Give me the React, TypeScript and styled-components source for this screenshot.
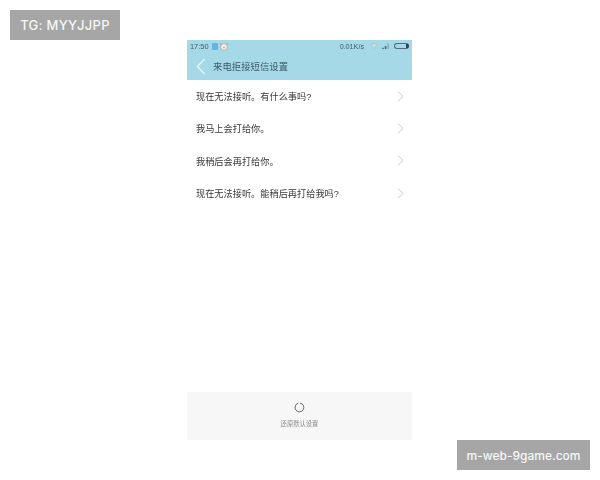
import React from 'react';
import styled, { createGlobalStyle } from 'styled-components';

const replies = ['现在无法接听。有什么事吗?', '我马上会打给你。', '我稍后会再打给你。', '现在无法接听。能稍后再打给我吗?'];

const App = () => (
  <Stage>
    <GlobalStyle />
    <Watermark $corner="top">TG: MYYJJPP</Watermark>
    <Phone>
      <Header>
        <StatusBar>
          <StatusGroup>
            <span>17:50</span>
            <AppBadge />
            <svg width="10" height="9" viewBox="0 0 10 9">
              <circle cx="5" cy="5" r="3.4" fill="#f3f1ec" stroke="#9a9a94" strokeWidth="0.7" />
              <path d="M2 3 1.5 1M8 3l.5-2" stroke="#a8a8a0" strokeWidth="1" />
              <circle cx="5" cy="5.5" r="1" fill="#c9a79f" />
            </svg>
          </StatusGroup>
          <StatusGroup>
            <NetworkSpeed>0.01K/s</NetworkSpeed>
            <StatusIcon width="8" height="6" viewBox="0 0 9 7">
              <path d="M.5 2C3 0 6 0 8.500 2L4.500 6.500Z" fill="#c2dde4" stroke="#8fb0ba" strokeWidth="0.5" />
            </StatusIcon>
            <StatusIcon width="8" height="6" viewBox="0 0 9 7">
              <path d="M0 7h2V5.500H0zM3 7h2V3.500H3z" fill="#4c6f7a" />
              <path d="M6 7h2V.5H6z" fill="#8fb0ba" />
            </StatusIcon>
            <Battery />
          </StatusGroup>
        </StatusBar>
        <TitleRow>
          <svg width="10" height="17" viewBox="0 0 10 17">
            <path d="M8.500 1 1.500 8.500l7 7.500" fill="none" stroke="#eaf6fa" strokeWidth="1.300" />
          </svg>
          <Title>来电拒接短信设置</Title>
        </TitleRow>
      </Header>
      <ReplyList>
        {replies.map((text) => (
          <ReplyRow key={text}>
            <span>{text}</span>
            <svg width="7" height="11" viewBox="0 0 7 11">
              <path d="M1 .8 6 5.500 1 10.200" fill="none" stroke="#c4c4c4" strokeWidth="0.9" />
            </svg>
          </ReplyRow>
        ))}
      </ReplyList>
      <RestoreBar>
        <svg width="11" height="11" viewBox="0 0 11 11">
          <path d="M4.300 1.200a4.400 4.400 0 1 0 1.800-.1" fill="none" stroke="#555" strokeWidth="0.9" />
        </svg>
        <RestoreLabel>还原默认设置</RestoreLabel>
      </RestoreBar>
    </Phone>
    <Watermark $corner="bottom">m-web-9game.com</Watermark>
  </Stage>
);

const GlobalStyle = createGlobalStyle`
  body {
    margin: 0;
    background: #fff;
    font-family: "Liberation Sans", "Noto Sans CJK SC", sans-serif;
  }
`;

const Stage = styled.div`
  position: relative;
  display: flex;
  justify-content: center;
  width: 600px;
  height: 480px;
  padding: 40px 1px 0 0;
  box-sizing: border-box;
  overflow: hidden;
`;

const Watermark = styled.div<{ $corner: 'top' | 'bottom' }>`
  position: absolute;
  display: flex;
  align-items: center;
  justify-content: center;
  height: 30px;
  background: #a6a6a6;
  color: #f6f6f6;
  font-family: "Inter", sans-serif;
  font-weight: 500;
  ${({ $corner }) =>
    $corner === 'top'
      ? 'top: 10px; left: 10px; width: 110px; font-size: 13px; letter-spacing: 0.3px;'
      : 'top: 440px; left: 457px; width: 133px; font-size: 12px; letter-spacing: 0;'}
`;

const Phone = styled.div`
  display: flex;
  flex-direction: column;
  width: 225px;
  height: 400px;
  background: #fff;
  filter: blur(0.45px);
`;

const Header = styled.header`
  display: flex;
  flex-direction: column;
  height: 40px;
  background: #a5d9e7;
`;

const StatusBar = styled.div`
  display: flex;
  align-items: center;
  justify-content: space-between;
  height: 12px;
  padding: 0 3px;
  color: #3f5a64;
  font-size: 7.4px;
`;

const StatusGroup = styled.div`
  display: flex;
  align-items: center;
  gap: 1px;
`;

const NetworkSpeed = styled.span`
  margin-right: 2px;
  font-size: 7.2px;
`;

const StatusIcon = styled.svg`
  margin-left: 3px;
`;

const AppBadge = styled.i`
  width: 6px;
  height: 7px;
  margin-left: 2px;
  background: #62b4e6;
  border-radius: 1px;
`;

const Battery = styled.i`
  box-sizing: border-box;
  width: 15px;
  height: 6px;
  margin-left: 3px;
  border: 0.7px solid #4c6f7a;
  border-right: 3px solid #2e4650;
  border-radius: 3px;
`;

const TitleRow = styled.div`
  display: flex;
  flex: 1;
  align-items: center;
  gap: 7px;
  padding-left: 9px;
`;

const Title = styled.h1`
  margin: 0;
  color: #3f5a64;
  font-size: 9.4px;
  font-weight: 400;
`;

const ReplyList = styled.ul`
  flex: 1;
  margin: 0;
  padding: 0;
  list-style: none;
`;

const ReplyRow = styled.li`
  display: flex;
  align-items: center;
  justify-content: space-between;
  height: 32.3px;
  padding: 0 8px 0 9px;
  color: #383838;
  font-size: 9.2px;
`;

const RestoreBar = styled.footer`
  display: flex;
  flex-direction: column;
  align-items: center;
  height: 48px;
  padding-top: 10px;
  box-sizing: border-box;
  background: #f7f7f7;
`;

const RestoreLabel = styled.span`
  margin-top: 6px;
  color: #888;
  font-size: 6.3px;
`;

export default App;
